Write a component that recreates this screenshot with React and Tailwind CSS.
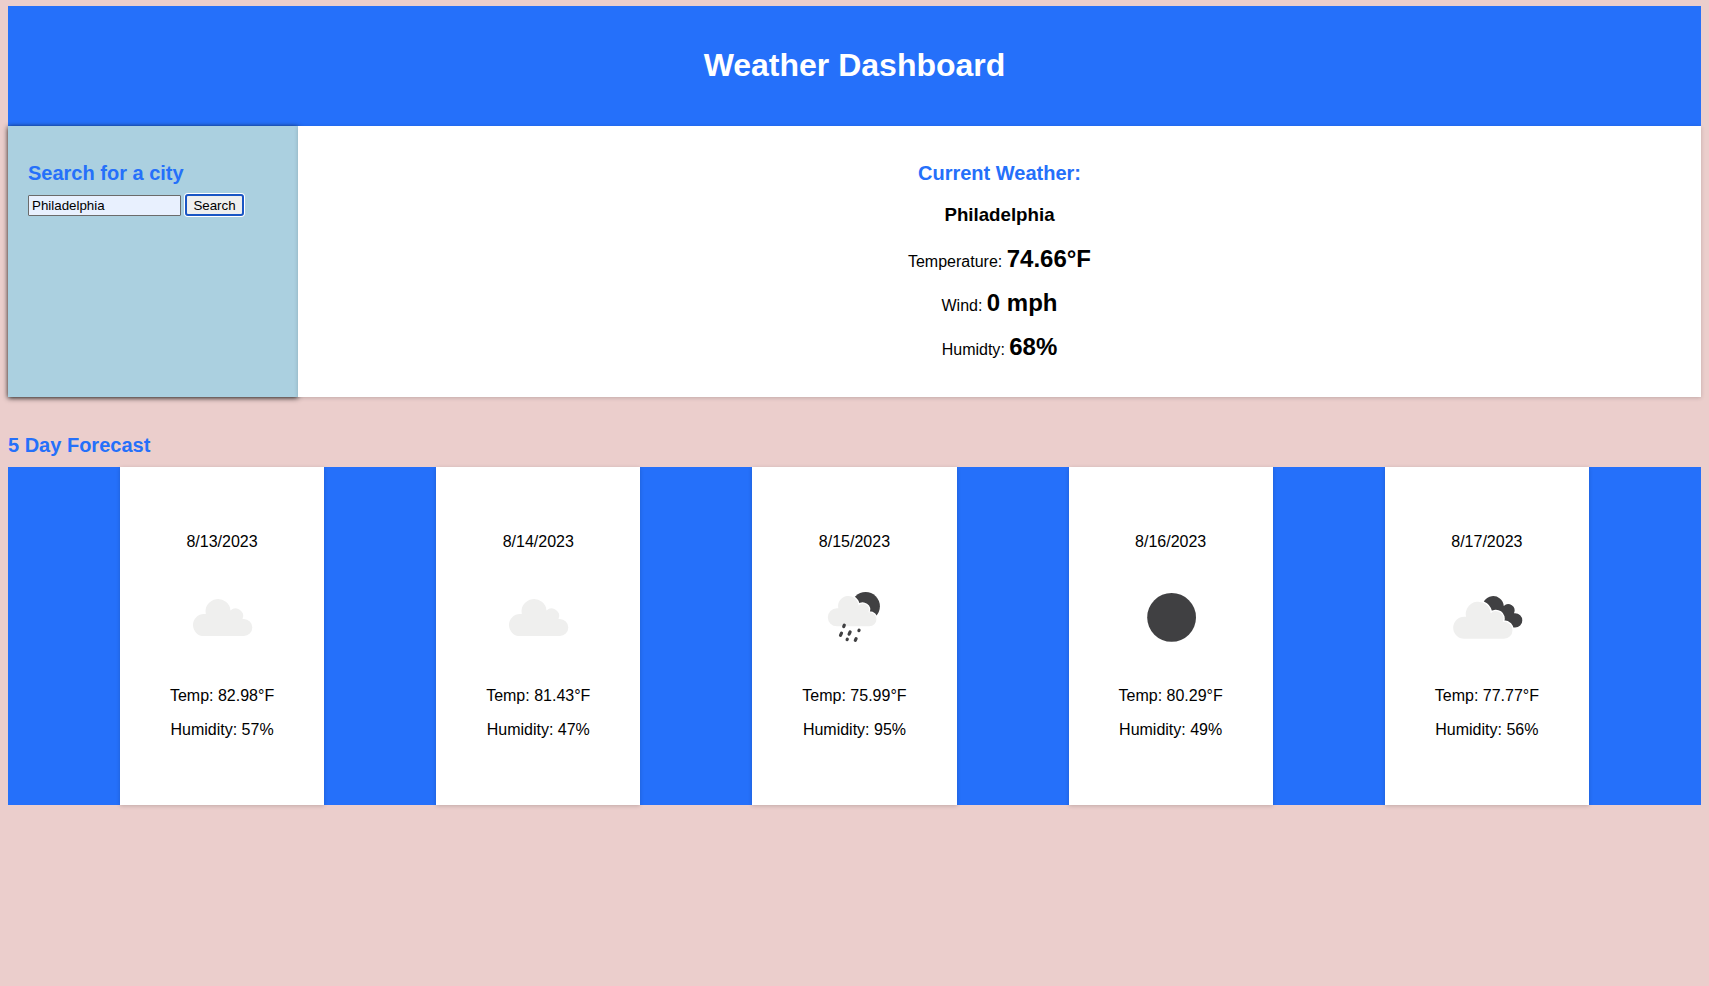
const CLOUD =
  'M31.5 67.7 A11 11 0 0 1 31.5 45.7 H33.3 A12.5 12.5 0 1 1 58 42.2 A7.5 7.5 0 0 1 70 50.7 H71.3 A8.5 8.5 0 0 1 71.3 67.7 Z';

function Cloud({ outlined }) {
  return (
    <>
      {outlined && <path d={CLOUD} fill="white" stroke="white" strokeWidth="3" />}
      <path d={CLOUD} fill="#efefee" />
    </>
  );
}

function WeatherIcon({ kind }) {
  return (
    <svg viewBox="0 0 100 100" className="size-[100px]" aria-hidden="true">
      {kind === 'cloud' && (
        <g transform="translate(.5 .4)">
          <Cloud />
        </g>
      )}
      {kind === 'clear' && <circle cx="50.6" cy="49.4" r="24.4" fill="#404042" />}
      {kind === 'rain' && (
        <>
          <circle cx="61.6" cy="38.3" r="14.3" fill="#404042" />
          <g transform="translate(23.8 58.3) scale(.82) translate(-20.5 -67.7)">
            <Cloud outlined />
          </g>
          <g stroke="#404042" strokeWidth="3.2" strokeLinecap="round">
            <path d="M40.3 57.2 L39.7 58.6 M37.5 65.2 L36.5 67.4 M46.1 64 L45.1 66.2 M55.1 62.2 L54.9 62.6 M43.3 71.2 L43.1 71.6 M52.1 70.6 L51.3 72.4" />
          </g>
        </>
      )}
      {kind === 'clouds' && (
        <>
          <g transform="translate(85.3 59.6) scale(.85) translate(-79.8 -67.7)">
            <path d={CLOUD} fill="#404042" />
          </g>
          <g transform="translate(-4.3 3)">
            <Cloud outlined />
          </g>
        </>
      )}
    </svg>
  );
}

const forecast = [
  { date: '8/13/2023', icon: 'cloud', temp: '82.98', humidity: 57 },
  { date: '8/14/2023', icon: 'cloud', temp: '81.43', humidity: 47 },
  { date: '8/15/2023', icon: 'rain', temp: '75.99', humidity: 95 },
  { date: '8/16/2023', icon: 'clear', temp: '80.29', humidity: 49 },
  { date: '8/17/2023', icon: 'clouds', temp: '77.77', humidity: 56 },
];

function Reading({ label, value }) {
  return (
    <p className="h-[27px] text-base leading-[27px]">
      {label}: <span className="text-2xl leading-[27px] font-bold">{value}</span>
    </p>
  );
}

export default function App() {
  return (
    <div className="min-h-screen bg-[#ebcecc] px-2 pt-1.5 font-['Liberation_Sans',Arial,sans-serif] text-black">
      <header className="flex h-[120px] justify-center bg-[#2570fa] pt-[41px]">
        <h1 className="text-[32px] leading-[36px] font-bold text-white">Weather Dashboard</h1>
      </header>

      <main className="flex h-[271px]">
        <section className="w-[290px] bg-[#abd0e0] px-5 pt-9 shadow-[0_1px_5px_rgba(0,0,0,0.9)]">
          <h2 className="text-xl leading-[23px] font-bold text-[#2570fa]">Search for a city</h2>
          <form className="mt-[9px] flex items-center gap-1" onSubmit={(e) => e.preventDefault()}>
            <input
              type="text"
              aria-label="City"
              defaultValue="Philadelphia"
              className="h-[21px] w-[153px] rounded-[1px] border border-[#6b6b6b] bg-[#e8f0fe] px-[3px] text-[13.333px] leading-[15px]"
            />
            <button className="h-[22px] w-[59px] rounded-[3px] border-2 border-[#1a56c4] bg-[#efefef] text-[13.333px] leading-[15px] ring-1 ring-white">
              Search
            </button>
          </form>
        </section>
        <section className="relative flex-1 bg-white pt-9 text-center shadow-[0_1px_4px_rgba(0,0,0,0.18)]">
          <h2 className="text-xl leading-[23px] font-bold text-[#2570fa]">Current Weather:</h2>
          <h3 className="mt-[19px] text-[18.72px] leading-[21px] font-bold">Philadelphia</h3>
          <div className="mt-[20px] flex flex-col gap-[17px]">
            <Reading label="Temperature" value="74.66°F" />
            <Reading label="Wind" value="0 mph" />
            <Reading label="Humidty" value="68%" />
          </div>
        </section>
      </main>

      <h2 className="mt-[37px] text-xl leading-[23px] font-bold text-[#2570fa]">5 Day Forecast</h2>
      <div className="mt-2.5 flex h-[338px] justify-evenly bg-[#2570fa]">
        {forecast.map((day) => (
          <article
            key={day.date}
            className="flex w-[204.3px] flex-col items-center bg-white pt-[66px] text-base leading-[18px] shadow-[0_1px_4px_rgba(0,0,0,0.18)]"
          >
            <p>{day.date}</p>
            <div className="mt-[17px]">
              <WeatherIcon kind={day.icon} />
            </div>
            <p className="mt-[19px]">Temp: {day.temp}°F</p>
            <p className="mt-4">Humidity: {day.humidity}%</p>
          </article>
        ))}
      </div>
    </div>
  );
}
